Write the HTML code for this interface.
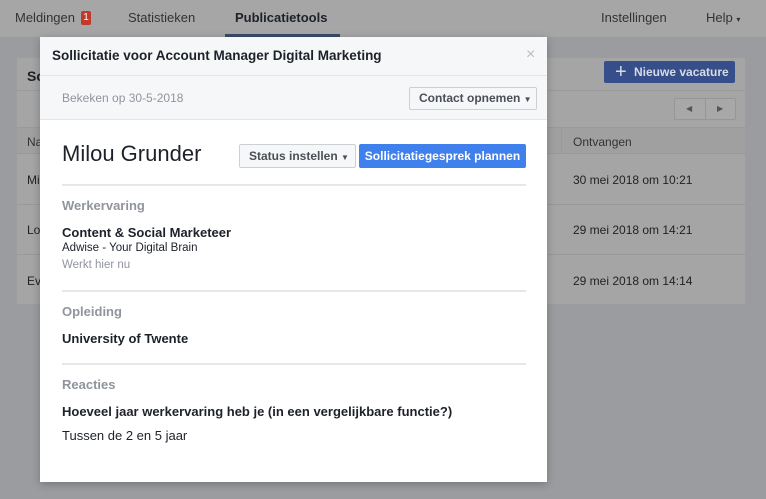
<!DOCTYPE html><html><head><style>
*{box-sizing:border-box;margin:0;padding:0}
body{width:766px;height:499px;overflow:hidden;background:#9b9c9f;font-family:"Liberation Sans",sans-serif;position:relative;font-size:12px;color:#1d2129}
.abs{position:absolute}
.nav{left:0;top:0;width:766px;height:37px;background:#a6a6a7;font-size:13px;color:#333}
.panel{left:16px;top:57px;width:730px;height:248px;background:#a5a5a6;border:1px solid #9d9d9e}
.modal{left:40px;top:37px;width:507px;height:445px;background:#fff;box-shadow:0 2px 8px rgba(0,0,0,.25)}
.hr{position:absolute;left:22px;width:464px;height:2px;background:#e6e7ea}
.sec{position:absolute;left:22px;font-size:13px;font-weight:bold;color:#90949c}
.b{font-weight:bold}
</style></head><body>
<div class="abs nav">
 <div class="abs" style="left:15px;top:10px">Meldingen</div>
 <div class="abs" style="left:81px;top:11px;width:10px;height:14px;background:#c0392b;color:#fff;font-size:10px;text-align:center;line-height:14px;border-radius:2px">1</div>
 <div class="abs" style="left:128px;top:10px">Statistieken</div>
 <div class="abs b" style="left:235px;top:10px;color:#1d2129">Publicatietools</div>
 <div class="abs" style="left:225px;top:34px;width:115px;height:3px;background:#3b4a6b"></div>
 <div class="abs" style="left:601px;top:10px">Instellingen</div>
 <div class="abs" style="left:706px;top:10px">Help <span style="font-size:8px">▾</span></div>
</div>
<div class="abs panel">
 <div class="abs b" style="left:10px;top:10px;font-size:14px;color:#222">So</div>
 <div class="abs" style="left:0;top:32px;width:728px;height:1px;background:#9a9a9b"></div>
 <div class="abs" style="left:587px;top:3px;width:131px;height:22px;background:#364f8a;border-radius:2px;color:#d5dbe8;font-weight:bold;font-size:12px;line-height:22px;padding-left:30px">Nieuwe vacature</div>
 <div class="abs" style="left:598px;top:3px;color:#d5dbe8;font-size:20px;line-height:22px">+</div>
 <div class="abs" style="left:657px;top:40px;width:62px;height:22px;border:1px solid #969697;border-radius:2px;background:#a8a8a9;font-size:8px;color:#555;line-height:20px"><span style="position:absolute;left:11px">◀</span><span style="position:absolute;left:30px;top:0;width:1px;height:20px;background:#969697"></span><span style="position:absolute;left:42px">▶</span></div>
 <div class="abs" style="left:0;top:69px;width:728px;height:27px;background:#a0a0a1;border-top:1px solid #999;border-bottom:1px solid #999"></div>
 <div class="abs" style="left:544px;top:69px;width:1px;height:27px;background:#999"></div>
 <div class="abs" style="left:10px;top:77px;color:#333">Na</div>
 <div class="abs" style="left:556px;top:77px;color:#333">Ontvangen</div>
 <div class="abs" style="left:10px;top:115px;color:#222">Mi</div>
 <div class="abs" style="left:556px;top:115px;color:#222">30 mei 2018 om 10:21</div>
 <div class="abs" style="left:0;top:146px;width:728px;height:1px;background:#999"></div>
 <div class="abs" style="left:10px;top:165px;color:#222">Lo</div>
 <div class="abs" style="left:556px;top:165px;color:#222">29 mei 2018 om 14:21</div>
 <div class="abs" style="left:0;top:196px;width:728px;height:1px;background:#999"></div>
 <div class="abs" style="left:10px;top:216px;color:#222">Ev</div>
 <div class="abs" style="left:556px;top:216px;color:#222">29 mei 2018 om 14:14</div>
</div>
<div class="abs modal">
 <div class="abs" style="left:0;top:0;width:507px;height:83px;background:#f6f7f9;border-bottom:1px solid #e5e5e5"></div>
 <div class="abs" style="left:0;top:38px;width:507px;height:1px;background:#e5e5e5"></div>
 <div class="abs b" style="left:12px;top:11px;font-size:13.5px">Sollicitatie voor Account Manager Digital Marketing</div>
 <div class="abs" style="left:486px;top:9px;font-size:16px;color:#bbb">×</div>
 <div class="abs" style="left:22px;top:54px;color:#90949c">Bekeken op 30-5-2018</div>
 <div class="abs b" style="left:369px;top:50px;width:128px;height:23px;border:1px solid #ccd0d5;background:#f6f7f9;border-radius:2px;color:#4b4f56;line-height:21px;padding-left:9px">Contact opnemen <span style="font-size:8px">▼</span></div>
 <div class="abs" style="left:22px;top:104px;font-size:22px;color:#1d2129">Milou Grunder</div>
 <div class="abs b" style="left:199px;top:107px;width:117px;height:24px;border:1px solid #ccd0d5;background:#f6f7f9;border-radius:2px;color:#4b4f56;line-height:22px;padding-left:9px">Status instellen <span style="font-size:8px">▼</span></div>
 <div class="abs b" style="left:319px;top:107px;width:167px;height:24px;background:#4080ec;border-radius:2px;color:#fff;line-height:24px;text-align:center">Sollicitatiegesprek plannen</div>
 <div class="hr" style="top:147px"></div>
 <div class="sec" style="top:161px">Werkervaring</div>
 <div class="abs b" style="left:22px;top:188px;font-size:13px">Content &amp; Social Marketeer</div>
 <div class="abs" style="left:22px;top:205px;font-size:11.5px">Adwise - Your Digital Brain</div>
 <div class="abs" style="left:22px;top:222px;font-size:11.5px;color:#90949c">Werkt hier nu</div>
 <div class="hr" style="top:253px"></div>
 <div class="sec" style="top:267px">Opleiding</div>
 <div class="abs b" style="left:22px;top:294px;font-size:13px">University of Twente</div>
 <div class="hr" style="top:326px"></div>
 <div class="sec" style="top:340px">Reacties</div>
 <div class="abs b" style="left:22px;top:367px;font-size:13px">Hoeveel jaar werkervaring heb je (in een vergelijkbare functie?)</div>
 <div class="abs" style="left:22px;top:391px;font-size:13px">Tussen de 2 en 5 jaar</div>
</div>
</body></html>
